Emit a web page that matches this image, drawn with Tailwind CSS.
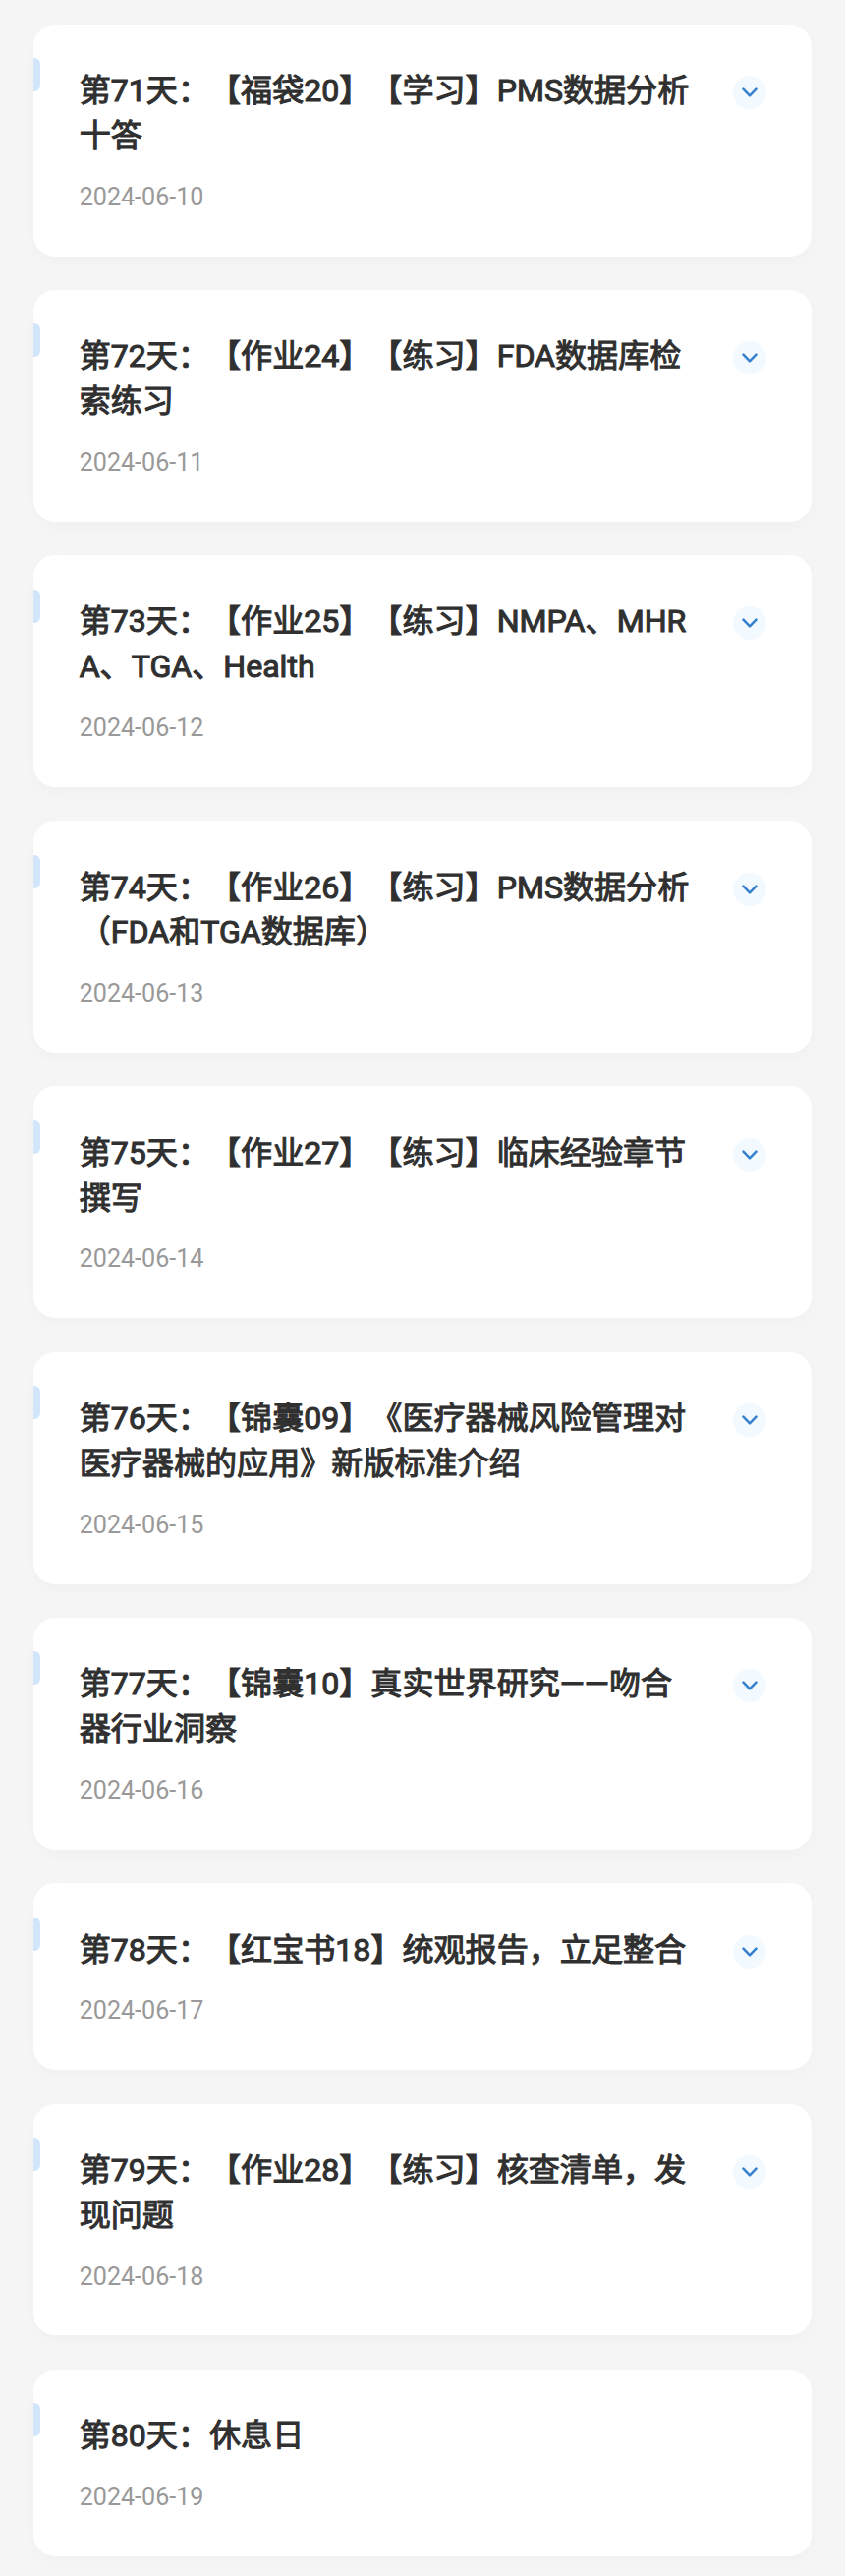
<!DOCTYPE html>
<html lang="zh-CN">
<head>
<meta charset="utf-8">
<title>课程日程</title>
<script src="https://cdn.jsdelivr.net/npm/@tailwindcss/browser@4"></script>
</head>
<body class="bg-[#f5f5f5] font-['Roboto','Noto_Sans_CJK_SC',sans-serif] [text-spacing-trim:space-all]">
<main id="list" class="flex flex-col gap-[34.3px] pt-[24.6px] pl-[34.3px] pr-[34px] h-[2621px] overflow-hidden"></main>
<template id="card">
  <article class="relative shrink-0 flex items-start justify-between rounded-[22px] bg-white pl-[46.4px] pr-[46.5px] pt-[45.4px] pb-[40.95px] shadow-[0_6px_16px_rgba(0,0,0,0.02)]">
    <span class="absolute left-0 top-[34.5px] h-[34px] w-[7px] rounded-r-[6px] bg-[#d1e5fb]"></span>
    <div>
      <h2 class="whitespace-nowrap text-[32.08px] leading-[45.8px] font-normal text-[#303030] [-webkit-text-stroke:1.1px_#303030]"></h2>
      <time class="mt-[20px] block text-[25.1px] leading-[38px] text-[#999]"></time>
    </div>
    <svg class="mt-[7px] size-[34px] shrink-0" viewBox="0 0 34 34" fill="none">
      <circle cx="17" cy="17" r="17" fill="#f2f9ff"/>
      <path d="M10.5 13.7l6.5 6.6 6.5-6.6" stroke="#3580cc" stroke-width="2.5" stroke-linecap="round" stroke-linejoin="round"/>
    </svg>
  </article>
</template>
<script>
const days = [
  ['第71天：【福袋20】【学习】PMS数据分析', '十答'],
  ['第72天：【作业24】【练习】FDA数据库检', '索练习'],
  ['第73天：【作业25】【练习】NMPA、MHR', 'A、TGA、Health'],
  ['第74天：【作业26】【练习】PMS数据分析', '（FDA和TGA数据库）'],
  ['第75天：【作业27】【练习】临床经验章节', '撰写'],
  ['第76天：【锦囊09】《医疗器械风险管理对', '医疗器械的应用》新版标准介绍'],
  ['第77天：【锦囊10】真实世界研究——吻合', '器行业洞察'],
  ['第78天：【红宝书18】统观报告，立足整合'],
  ['第79天：【作业28】【练习】核查清单，发', '现问题'],
  ['第80天：休息日']
];
days.forEach((lines, i) => {
  const node = document.getElementById('card').content.cloneNode(true);
  node.querySelector('h2').innerHTML = lines.join('<br>');
  node.querySelector('time').textContent = '2024-06-' + (10 + i);
  if (i === 9) node.querySelector('svg').remove();
  document.getElementById('list').append(node);
});
</script>
</body>
</html>
